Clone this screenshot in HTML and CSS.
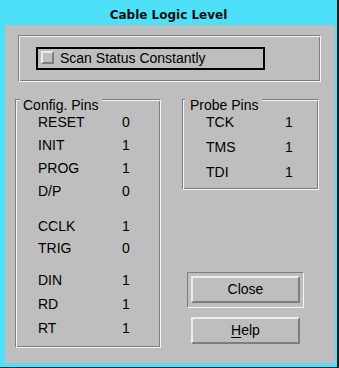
FILE: index.html
```html
<!DOCTYPE html>
<html>
<head>
<meta charset="utf-8">
<link rel="stylesheet" href="styles.css">
</head>
<body>
<div class="window">
  <div class="titlebar"><span class="title">Cable Logic Level</span></div>
  <div class="client">
    <div class="topframe">
      <div class="toggle">
        <span class="indicator"></span>
        <span class="toggle-label">Scan Status Constantly</span>
      </div>
    </div>
    <div class="lower">
      <div class="group config">
        <div class="group-title"><span class="group-label">Config. Pins</span></div>
        <div class="pin-section first">
          <div class="pin"><span>RESET</span><span>0</span></div>
          <div class="pin"><span>INIT</span><span>1</span></div>
          <div class="pin"><span>PROG</span><span>1</span></div>
          <div class="pin"><span>D/P</span><span>0</span></div>
        </div>
        <div class="pin-section second">
          <div class="pin"><span>CCLK</span><span>1</span></div>
          <div class="pin"><span>TRIG</span><span>0</span></div>
        </div>
        <div class="pin-section third">
          <div class="pin"><span>DIN</span><span>1</span></div>
          <div class="pin"><span>RD</span><span>1</span></div>
          <div class="pin"><span>RT</span><span>1</span></div>
        </div>
      </div>
      <div class="rightcol">
        <div class="group probe">
          <div class="group-title"><span class="group-label">Probe Pins</span></div>
          <div class="pin-section probe-pins">
            <div class="pin"><span>TCK</span><span>1</span></div>
            <div class="pin"><span>TMS</span><span>1</span></div>
            <div class="pin"><span>TDI</span><span>1</span></div>
          </div>
        </div>
        <div class="default-ring"><div class="btn">Close</div></div>
        <div class="btn help"><span class="mnemonic">H</span>elp</div>
      </div>
    </div>
  </div>
</div>
</body>
</html>
```

FILE: styles.css
```css
html, body {
  margin: 0;
  padding: 0;
  background: #bebebe;
}

.window {
  box-sizing: border-box;
  width: 339px;
  height: 368px;
  background: #4fe0f9;
  border-right: 2px solid #1a1a1a;
  border-bottom: 1px solid #1a1a1a;
  padding: 0 2px 4px 5px;
  display: flex;
  flex-direction: column;
}

.titlebar {
  height: 25px;
  box-sizing: border-box;
  padding-top: 5px;
  text-align: center;
  margin-left: -5px;
  margin-right: -2px;
}

.title {
  font-family: "DejaVu Sans", sans-serif;
  font-weight: bold;
  font-size: 12px;
  line-height: 14px;
  color: #101010;
}

.client {
  width: 330px;
  height: 338px;
  background: #bebebe;
  display: flex;
  flex-direction: column;
  font-family: "Liberation Sans", Arial, sans-serif;
  font-size: 14px;
  color: #000;
}

.topframe {
  box-sizing: border-box;
  margin: 10px 0 0 13px;
  width: 303px;
  height: 47px;
  border: 1px solid;
  border-color: #7e7e7e #f4f4f4 #f4f4f4 #7e7e7e;
  box-shadow: inset 1px 1px 0 #f4f4f4, inset -1px -1px 0 #7e7e7e;
  padding: 11px 0 0 17px;
}

.toggle {
  box-sizing: border-box;
  width: 229px;
  height: 23px;
  border: 2px solid #000;
  display: flex;
  align-items: flex-start;
  padding-left: 3px;
}

.indicator {
  box-sizing: border-box;
  width: 13px;
  height: 13px;
  margin-top: 2px;
  border: 2px solid;
  border-color: #ececec #7e7e7e #7e7e7e #ececec;
  background: #bebebe;
}

.toggle-label {
  margin-left: 6px;
  line-height: 19px;
}

.lower {
  display: flex;
  margin-top: 17px;
  align-items: flex-start;
}

.group {
  box-sizing: border-box;
  border: 1px solid;
  border-color: #7e7e7e #f4f4f4 #f4f4f4 #7e7e7e;
  box-shadow: inset 1px 1px 0 #f4f4f4, inset -1px -1px 0 #7e7e7e;
  padding: 1px;
}

.config {
  margin-left: 10px;
  width: 146px;
  height: 249px;
}

.group-title {
  display: flex;
  margin-top: -4px;
  height: 16px;
}

.group-label {
  display: inline-block;
  background: #bebebe;
  line-height: 16px;
  padding: 0 4px 0 3px;
}

.config .group-label {
  margin-left: 3px;
}

.probe .group-label {
  margin-left: 1px;
  padding-left: 5px;
}

.pin-section {
  display: flex;
  flex-direction: column;
  padding-left: 21px;
}

.pin {
  display: grid;
  grid-template-columns: 84px auto;
  line-height: 16px;
}

.first {
  margin-top: 1px;
  gap: 7px;
}

.second {
  margin-top: 19px;
  gap: 6px;
}

.third {
  margin-top: 16px;
  gap: 8px;
}

.rightcol {
  margin-left: 21px;
  width: 137px;
  display: flex;
  flex-direction: column;
}

.probe {
  width: 137px;
  height: 91px;
}

.probe-pins {
  margin-top: 1px;
  padding-left: 22px;
  gap: 9px;
}

.probe-pins .pin {
  grid-template-columns: 79px auto;
}

.default-ring {
  box-sizing: border-box;
  margin: 82px 0 0 5px;
  width: 117px;
  height: 36px;
  border: 1px solid;
  border-color: #7e7e7e #f4f4f4 #f4f4f4 #7e7e7e;
  padding: 3px 3px 0 3px;
}

.btn {
  box-sizing: border-box;
  width: 109px;
  height: 27px;
  border: 2px solid;
  border-color: #ececec #7e7e7e #7e7e7e #ececec;
  text-align: center;
  line-height: 23px;
}

.help {
  margin: 9px 0 0 9px;
}

.mnemonic {
  text-decoration: underline;
  text-underline-offset: 2px;
}
```
